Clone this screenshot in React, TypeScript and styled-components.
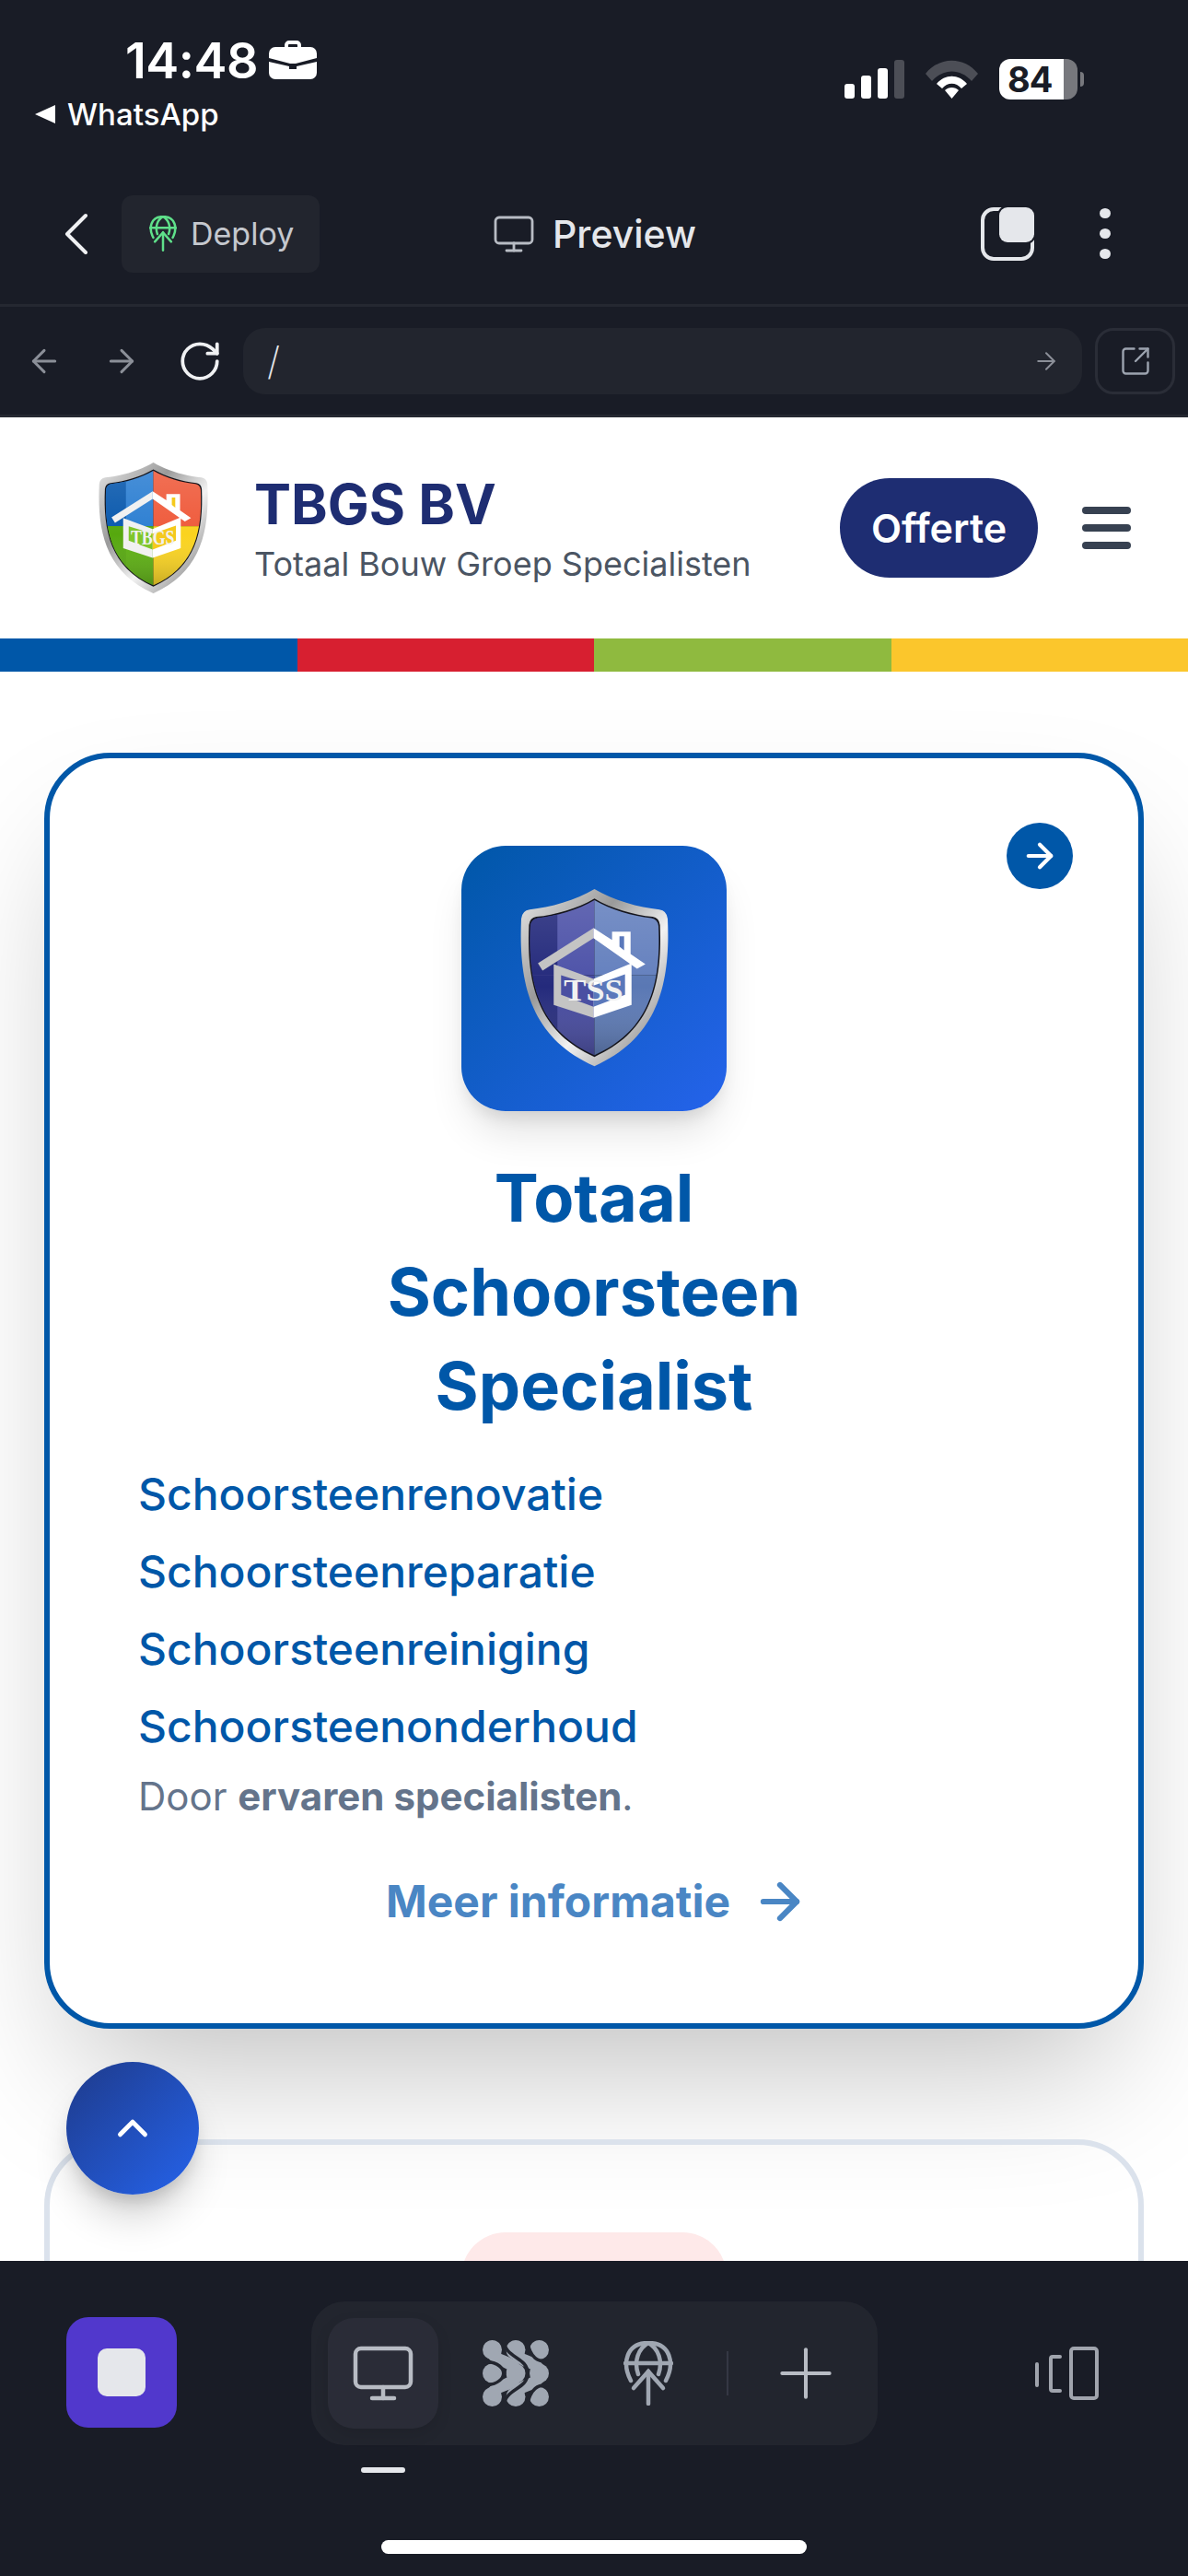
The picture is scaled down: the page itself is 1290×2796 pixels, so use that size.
import React from "react";
import styled, { createGlobalStyle } from "styled-components";
import {
  ArrowLeft,
  ArrowRight,
  ChevronLeft,
  ChevronUp,
  Monitor,
  Plus,
  RotateCw,
  SquareArrowOutUpRight,
} from "lucide-react";

const GlobalStyle = createGlobalStyle`
  html, body {
    margin: 0;
    padding: 0;
    background: #191c26;
  }
  * {
    box-sizing: border-box;
  }
  body {
    font-family: Inter, "Liberation Sans", sans-serif;
  }
`;

const Phone = styled.div`
  width: 1290px;
  height: 2796px;
  display: flex;
  flex-direction: column;
  overflow: hidden;
  background: #191c26;
`;

/* status bar */
const StatusBar = styled.div`
  height: 190px;
  flex: none;
  display: flex;
  justify-content: space-between;
  padding: 35px 120px 0 38px;
`;
const StatusLeft = styled.div`
  display: flex;
  flex-direction: column;
`;
const TimeRow = styled.div`
  display: flex;
  align-items: center;
  gap: 12px;
  padding-left: 98px;
  height: 60px;
  color: #fff;
  font-size: 54px;
  font-weight: 600;
  letter-spacing: -0.5px;
`;
const BackApp = styled.div`
  display: flex;
  align-items: center;
  gap: 13px;
  margin-top: 8px;
  color: #fff;
  font-size: 33px;
  font-weight: 500;
  line-height: 42px;
`;
const BackTriangle = styled.span`
  width: 0;
  height: 0;
  border-top: 10px solid transparent;
  border-bottom: 10px solid transparent;
  border-right: 22px solid #fff;
`;
const StatusRight = styled.div`
  display: flex;
  align-items: center;
  gap: 23px;
  height: 44px;
  margin-top: 29px;
`;
const Battery = styled.div`
  position: relative;
  width: 85px;
  height: 44px;
  border-radius: 12px;
  background: linear-gradient(90deg, #fff 82%, #77787d 82%);
  color: #191c26;
  font-size: 38px;
  font-weight: 700;
  line-height: 45px;
  padding-left: 9px;
  letter-spacing: -1px;
  &::after {
    content: "";
    position: absolute;
    right: -7px;
    top: 14px;
    width: 4px;
    height: 16px;
    border-radius: 0 4px 4px 0;
    background: #77787d;
  }
`;

/* top toolbar */
const NavBar = styled.div`
  height: 143px;
  flex: none;
  display: flex;
  align-items: center;
  padding: 0 84px 13px 60px;
  border-bottom: 3px solid #252831;
`;
const BackButton = styled.div`
  width: 72px;
  height: 80px;
  display: flex;
  color: #f0f1f3;
  svg {
    flex: none;
    margin-left: -17px;
  }
`;
const DeployPill = styled.div`
  display: flex;
  align-items: center;
  gap: 15px;
  width: 215px;
  height: 84px;
  padding-left: 30px;
  border-radius: 12px;
  background: #22252e;
  color: #c5c8ce;
  font-size: 34px;
`;
const PreviewTitle = styled.div`
  display: flex;
  align-items: center;
  gap: 18px;
  margin-left: 187px;
  color: #e5e7eb;
  font-size: 41px;
  font-weight: 500;
`;
const NavActions = styled.div`
  margin-left: auto;
  display: flex;
  align-items: center;
  gap: 71px;
`;
const TabsIcon = styled.div`
  position: relative;
  width: 58px;
  height: 58px;
  &::before {
    content: "";
    position: absolute;
    left: 0;
    bottom: 0;
    width: 50px;
    height: 50px;
    border: 4px solid #e5e7eb;
    border-radius: 14px;
  }
  &::after {
    content: "";
    position: absolute;
    right: 0;
    top: 0;
    width: 38px;
    height: 38px;
    border-radius: 9px;
    background: #e5e7eb;
    box-shadow: 0 0 0 2px #191c26;
  }
`;
const Dots = styled.div`
  display: flex;
  flex-direction: column;
  gap: 11px;
  width: 12px;
  span {
    width: 12px;
    height: 11px;
    border-radius: 50%;
    background: #e5e7eb;
  }
`;

/* address row */
const AddressBar = styled.div`
  height: 120px;
  flex: none;
  display: flex;
  align-items: center;
  padding: 0 14px 0 28px;
  border-bottom: 3px solid #252831;
`;
const AddressIcon = styled.div<{ $w: number; $color: string }>`
  width: ${(p) => p.$w}px;
  display: flex;
  color: ${(p) => p.$color};
`;
const UrlField = styled.div`
  flex: 1;
  height: 72px;
  display: flex;
  align-items: center;
  justify-content: space-between;
  padding: 0 24px 0 26px;
  border-radius: 24px;
  background: #22252e;
  color: #e5e7eb;
  font-size: 42px;
  font-weight: 200;
`;
const OpenButton = styled.div`
  width: 87px;
  height: 72px;
  margin-left: 14px;
  display: flex;
  align-items: center;
  justify-content: center;
  border: 3px solid #2a2d37;
  border-radius: 20px;
  color: #9ca3af;
`;

/* previewed website */
const Viewport = styled.div`
  position: relative;
  flex: 1;
  min-height: 0;
  overflow: hidden;
  background: #fff;
`;
const SiteHeader = styled.header`
  height: 240px;
  display: flex;
  align-items: center;
  padding: 0 62px 0 107px;
`;
const Brand = styled.div`
  display: flex;
  flex-direction: column;
  margin: 4px 0 0 50px;
`;
const BrandName = styled.div`
  color: #1e2d72;
  font-size: 60px;
  font-weight: 700;
  line-height: 68px;
`;
const BrandTag = styled.div`
  color: #4b5563;
  font-size: 36px;
  line-height: 50px;
  margin-top: 6px;
`;
const QuoteButton = styled.div`
  margin-left: auto;
  width: 215px;
  height: 108px;
  display: flex;
  align-items: center;
  justify-content: center;
  border-radius: 54px;
  background: #1e2d72;
  color: #fff;
  font-size: 43px;
  font-weight: 600;
`;
const Burger = styled.div`
  margin-left: 48px;
  display: flex;
  flex-direction: column;
  gap: 11px;
  span {
    width: 53px;
    height: 8px;
    border-radius: 4px;
    background: #374151;
  }
`;
const ColorStrip = styled.div`
  display: grid;
  grid-template-columns: repeat(4, 1fr);
  height: 36px;
`;
const StripPart = styled.div<{ $color: string }>`
  background: ${(p) => p.$color};
`;
const Cards = styled.div`
  display: flex;
  flex-direction: column;
  gap: 120px;
  padding: 88px 48px 0;
`;
const Card = styled.div<{ $featured?: boolean }>`
  position: relative;
  display: flex;
  flex-direction: column;
  height: ${(p) => (p.$featured ? "1385px" : "600px")};
  padding: 95px 96px 0;
  border: 6px solid ${(p) => (p.$featured ? "#0057a8" : "#dbe2ec")};
  border-radius: 72px;
  background: ${(p) => (p.$featured ? "#fff" : "transparent")};
  box-shadow: ${(p) =>
    p.$featured ? "0 75px 150px -36px rgba(0, 0, 0, 0.25)" : "none"};
`;
const CornerBadge = styled.div`
  position: absolute;
  top: 70px;
  right: 71px;
  width: 72px;
  height: 72px;
  display: flex;
  align-items: center;
  justify-content: center;
  border-radius: 50%;
  background: #0057a8;
  color: #fff;
`;
const Tile = styled.div<{ $tint: string }>`
  width: 288px;
  height: 288px;
  flex: none;
  align-self: center;
  display: flex;
  align-items: center;
  justify-content: center;
  border-radius: 48px;
  background: ${(p) => p.$tint};
`;
const BlueTile = styled(Tile)`
  box-shadow: 0 30px 45px -9px rgba(0, 0, 0, 0.12),
    0 12px 18px -6px rgba(0, 0, 0, 0.1);
`;
const CardTitle = styled.h2`
  margin: 43px 0 0;
  color: #0057a8;
  font-size: 72px;
  font-weight: 700;
  line-height: 102px;
  text-align: center;
`;
const ServiceList = styled.div`
  margin-top: 25px;
  display: flex;
  flex-direction: column;
`;
const Service = styled.div`
  color: #0057a8;
  font-size: 48px;
  font-weight: 500;
  line-height: 84px;
`;
const Note = styled.p`
  margin: 0;
  color: #64748b;
  font-size: 42px;
  line-height: 68px;
  b {
    font-weight: 700;
  }
`;
const MoreLink = styled.div`
  margin-top: 46px;
  padding-left: 7px;
  display: flex;
  align-items: center;
  justify-content: center;
  gap: 23px;
  color: #4a86c4;
  font-size: 48px;
  font-weight: 700;
  line-height: 68px;
`;
const ScrollTop = styled.div`
  position: absolute;
  left: 72px;
  bottom: 72px;
  width: 144px;
  height: 144px;
  display: flex;
  align-items: center;
  justify-content: center;
  border-radius: 50%;
  background: linear-gradient(135deg, #1e3a8a, #2563eb);
  box-shadow: 0 30px 45px -9px rgba(0, 0, 0, 0.2),
    0 12px 18px -6px rgba(0, 0, 0, 0.15);
  color: #fff;
`;

/* bottom dock */
const BottomBar = styled.div`
  position: relative;
  height: 342px;
  flex: none;
  display: flex;
  align-items: flex-start;
  padding: 44px 0 0 72px;
`;
const StopButton = styled.div`
  width: 120px;
  height: 120px;
  margin-top: 17px;
  display: flex;
  align-items: center;
  justify-content: center;
  border-radius: 24px;
  background: #5138cc;
  &::before {
    content: "";
    width: 52px;
    height: 52px;
    border-radius: 10px;
    background: #e5e7eb;
  }
`;
const Dock = styled.div`
  width: 615px;
  height: 156px;
  margin-left: 146px;
  display: flex;
  align-items: center;
  padding-left: 18px;
  border-radius: 36px;
  background: #22252e;
`;
const DockItem = styled.div<{ $active?: boolean; $w: number }>`
  width: ${(p) => p.$w}px;
  height: 120px;
  flex: none;
  display: flex;
  align-items: center;
  justify-content: center;
  border-radius: 28px;
  color: ${(p) => (p.$active ? "#b8bcc4" : "#a0a7b2")};
  background: ${(p) => (p.$active ? "#2a2c37" : "transparent")};
  box-shadow: ${(p) => (p.$active ? "0 6px 16px rgba(0, 0, 0, 0.1)" : "none")};
`;
const DockDivider = styled.div`
  width: 2px;
  height: 48px;
  flex: none;
  margin-left: 25px;
  background: #353844;
`;
const DeviceButton = styled.div`
  margin-left: 170px;
  margin-top: 49px;
  display: flex;
`;
const ActiveTick = styled.div`
  position: absolute;
  left: 392px;
  top: 224px;
  width: 48px;
  height: 6px;
  border-radius: 3px;
  background: #e5e7eb;
`;
const HomeBar = styled.div`
  position: absolute;
  left: 414px;
  top: 303px;
  width: 462px;
  height: 15px;
  border-radius: 8px;
  background: #fff;
`;

const SHIELD =
  "M80 0C100 12 128 20 150 22Q158 23 159 32C162 100 150 160 80 191C10 160 -2 100 1 32Q2 23 10 22C32 20 60 12 80 0Z";

type ShieldProps = {
  id: string;
  size: number;
  label: string;
  labelSize: number;
  colors: {
    tl: string;
    tlDark: string;
    tr: string;
    bl: string;
    blDark: string;
    br: string;
  };
  windowLeft: string;
  windowRight: string;
  frameLeft: string;
};

const ShieldLogo = ({
  id,
  size,
  label,
  labelSize,
  colors,
  windowLeft,
  windowRight,
  frameLeft,
}: ShieldProps) => (
  <svg
    width={size}
    height={(size * 192) / 160}
    viewBox="0 0 160 192"
    style={{ flex: "none" }}
  >
    <defs>
      <linearGradient id={`${id}-rim`} x1="0" y1="0" x2="1" y2="1">
        <stop offset="0" stopColor="#e8e8e8" />
        <stop offset="0.35" stopColor="#9a9a9a" />
        <stop offset="0.6" stopColor="#f2f2f2" />
        <stop offset="1" stopColor="#6f6f6f" />
      </linearGradient>
      <linearGradient id={`${id}-gloss`} x1="0" y1="0" x2="0" y2="1">
        <stop offset="0" stopColor="#fff" stopOpacity="0.14" />
        <stop offset="0.55" stopColor="#fff" stopOpacity="0" />
        <stop offset="1" stopColor="#000" stopOpacity="0.28" />
      </linearGradient>
      <clipPath id={`${id}-face`}>
        <path d={SHIELD} transform="translate(80 96) scale(.875) translate(-80 -96)" />
      </clipPath>
    </defs>
    <path d={SHIELD} fill={`url(#${id}-rim)`} />
    <path
      d={SHIELD}
      fill="#15151c"
      transform="translate(80 96) scale(.895) translate(-80 -96)"
    />
    <g clipPath={`url(#${id}-face)`}>
      <rect x="0" y="0" width="80" height="93" fill={colors.tl} />
      <rect x="0" y="0" width="40" height="93" fill={colors.tlDark} />
      <rect x="80" y="0" width="80" height="93" fill={colors.tr} />
      <rect x="0" y="93" width="80" height="100" fill={colors.bl} />
      <rect x="0" y="93" width="40" height="100" fill={colors.blDark} />
      <rect x="80" y="93" width="80" height="100" fill={colors.br} />
      <rect x="0" y="0" width="160" height="192" fill={`url(#${id}-gloss)`} />
    </g>
    <polygon points="19,80 79,42 79,53 24,88" fill={frameLeft} />
    <polygon
      points="79,42 99,55 99,46 119,46 119,70 135,81 126,86 79,53"
      fill="#fff"
    />
    <polygon points="107,51 112,51 112,66 107,62" fill={windowRight} />
    <path d="M36 81L79 97V139L36 125Z" fill={frameLeft} />
    <path d="M79 97L120 80V125L79 139Z" fill="#fff" />
    <path d="M44 93L79 104V127L44 114Z" fill={windowLeft} />
    <path d="M113 92L79 104V127L113 114Z" fill={windowRight} />
    <text
      x="79"
      y="120"
      textAnchor="middle"
      fontFamily="'Liberation Serif', serif"
      fontWeight="700"
      fontSize={labelSize}
      fill="#f1f1f1"
      textLength="64"
      lengthAdjust="spacingAndGlyphs"
    >
      {label}
    </text>
  </svg>
);

const Briefcase = () => (
  <svg width="52" height="42" viewBox="0 0 52 42" fill="#fff">
    <path d="M17 8V5a5 5 0 0 1 5-5h8a5 5 0 0 1 5 5v3h-4V5a1 1 0 0 0-1-1h-8a1 1 0 0 0-1 1v3z" />
    <path d="M7 7h38a7 7 0 0 1 7 7v5L29 25h-6L0 19v-5a7 7 0 0 1 7-7z" />
    <path d="M0 23l22 5v3h8v-3l22-5v12a7 7 0 0 1-7 7H7a7 7 0 0 1-7-7z" />
  </svg>
);

const Signal = () => (
  <svg width="65" height="42" viewBox="0 0 65 42">
    <rect x="0" y="26" width="11" height="16" rx="3" fill="#fff" />
    <rect x="18" y="17" width="11" height="25" rx="3" fill="#fff" />
    <rect x="36" y="9" width="11" height="33" rx="3" fill="#fff" />
    <rect x="54" y="0" width="11" height="42" rx="3" fill="#4c4e56" />
  </svg>
);

const Wifi = () => (
  <svg width="57" height="42" viewBox="0 0 57 42">
    <path d="M0 15C15 -4 42 -4 57 15L50 23C38 9 19 9 7 23Z" fill="#4c4e56" />
    <path d="M12 26C21 15 36 15 45 26L39 31C33 24 24 24 18 31Z" fill="#fff" />
    <path d="M21 33C25 29 32 29 36 33L28.500 42Z" fill="#fff" />
  </svg>
);

const DeployGlobe = ({
  size,
  color,
  width,
}: {
  size: number;
  color: string;
  width: number;
}) => (
  <svg
    width={size}
    height={(size * 70) / 54}
    viewBox="0 0 54 70"
    fill="none"
    stroke={color}
    strokeWidth={width}
    strokeLinecap="round"
  >
    <path d="M8 43C-2 24 3 2 27 2C51 2 56 24 46 43" />
    <path d="M16 36C11 22 16 8 27 2C38 8 43 22 38 36" />
    <path d="M2 24H52" />
    <path d="M27 33V68" />
    <path d="M11 51L27 33L43 51" />
  </svg>
);

const NodesIcon = () => (
  <svg width="72" height="72" viewBox="0 0 72 72" fill="#a0a7b2">
    <circle cx="10.500" cy="10.500" r="10.500" />
    <circle cx="36" cy="10.500" r="10.500" />
    <circle cx="61.500" cy="10.500" r="10.500" />
    <circle cx="10.500" cy="36" r="10.500" />
    <circle cx="36" cy="36" r="10.500" />
    <circle cx="61.500" cy="36" r="10.500" />
    <circle cx="10.500" cy="61.500" r="10.500" />
    <circle cx="36" cy="61.500" r="10.500" />
    <circle cx="61.500" cy="61.500" r="10.500" />
    <path
      d="M10.500 10.500C10.500 26 36 20 36 36C36 52 10.500 46 10.500 61.500"
      fill="none"
      stroke="#a0a7b2"
      strokeWidth="13"
    />
    <path
      d="M36 10.500C36 26 61.500 20 61.500 36C61.500 52 36 46 36 61.500"
      fill="none"
      stroke="#a0a7b2"
      strokeWidth="13"
    />
    <g fill="none" stroke="#22252e" strokeWidth="3.500">
      <path d="M23 0C24 20 49 18 49 36C49 54 24 52 23 72" />
      <path d="M0 23C10 23 20 25 24 36C20 47 10 49 0 49" />
      <path d="M72 23C60 24 52 20 48 0" />
      <path d="M72 49C60 48 52 52 48 72" />
    </g>
  </svg>
);

const DeviceIcon = () => (
  <svg
    width="70"
    height="58"
    viewBox="0 0 70 58"
    fill="none"
    stroke="#a0a4ad"
    strokeWidth="4"
    strokeLinecap="round"
    strokeLinejoin="round"
  >
    <rect x="40" y="2" width="28" height="54" rx="3" />
    <path d="M28 11H20a2 2 0 0 0-2 2V46a2 2 0 0 0 2 2h8" />
    <path d="M3 19V42" />
  </svg>
);

const SERVICES = [
  "Schoorsteenrenovatie",
  "Schoorsteenreparatie",
  "Schoorsteenreiniging",
  "Schoorsteenonderhoud",
];

const STRIP = ["#0057a8", "#d71f30", "#8fba3f", "#fbc62c"];

const App = () => (
  <Phone>
    <GlobalStyle />
    <StatusBar>
      <StatusLeft>
        <TimeRow>
          14:48
          <Briefcase />
        </TimeRow>
        <BackApp>
          <BackTriangle />
          WhatsApp
        </BackApp>
      </StatusLeft>
      <StatusRight>
        <Signal />
        <Wifi />
        <Battery>84</Battery>
      </StatusRight>
    </StatusBar>

    <NavBar>
      <BackButton>
        <ChevronLeft size={80} strokeWidth={1.2} />
      </BackButton>
      <DeployPill>
        <DeployGlobe size={30} color="#5fe08a" width={4.5} />
        Deploy
      </DeployPill>
      <PreviewTitle>
        <Monitor size={48} strokeWidth={1.4} color="#b8bcc4" />
        Preview
      </PreviewTitle>
      <NavActions>
        <TabsIcon />
        <Dots>
          <span />
          <span />
          <span />
        </Dots>
      </NavActions>
    </NavBar>

    <AddressBar>
      <AddressIcon $w={84} $color="#8b8f98">
        <ArrowLeft size={40} strokeWidth={1.8} />
      </AddressIcon>
      <AddressIcon $w={80} $color="#8b8f98">
        <ArrowRight size={40} strokeWidth={1.8} />
      </AddressIcon>
      <AddressIcon $w={72} $color="#f0f1f3">
        <RotateCw size={50} strokeWidth={1.8} />
      </AddressIcon>
      <UrlField>
        /
        <ArrowRight size={30} strokeWidth={1.6} color="#8b8f98" />
      </UrlField>
      <OpenButton>
        <SquareArrowOutUpRight size={36} strokeWidth={1.6} />
      </OpenButton>
    </AddressBar>

    <Viewport>
      <SiteHeader>
        <ShieldLogo
          id="tbgs"
          size={119}
          label="TBGS"
          labelSize={30}
          colors={{
            tl: "#2d7fd2",
            tlDark: "#0a59ad",
            tr: "#ef5b3c",
            bl: "#5cb010",
            blDark: "#56a80e",
            br: "#fad31f",
          }}
          windowLeft="#7fc62a"
          windowRight="#f5c91c"
          frameLeft="#f1f1f1"
        />
        <Brand>
          <BrandName>TBGS BV</BrandName>
          <BrandTag>Totaal Bouw Groep Specialisten</BrandTag>
        </Brand>
        <QuoteButton>Offerte</QuoteButton>
        <Burger>
          <span />
          <span />
          <span />
        </Burger>
      </SiteHeader>
      <ColorStrip>
        {STRIP.map((c) => (
          <StripPart key={c} $color={c} />
        ))}
      </ColorStrip>
      <Cards>
        <Card $featured>
          <CornerBadge>
            <ArrowRight size={42} strokeWidth={2.4} />
          </CornerBadge>
          <BlueTile $tint="linear-gradient(135deg, #0057a8, #2563eb)">
            <ShieldLogo
              id="tss"
              size={161}
              label="TSS"
              labelSize={34}
              colors={{
                tl: "#4d52a8",
                tlDark: "#242a7c",
                tr: "#6480be",
                bl: "#44489e",
                blDark: "#242a7c",
                br: "#5a78b4",
              }}
              windowLeft="#4a4fa2"
              windowRight="#5a78bb"
              frameLeft="#c4c4c4"
            />
          </BlueTile>
          <CardTitle>
            Totaal
            <br />
            Schoorsteen
            <br />
            Specialist
          </CardTitle>
          <ServiceList>
            {SERVICES.map((s) => (
              <Service key={s}>{s}</Service>
            ))}
          </ServiceList>
          <Note>
            Door <b>ervaren specialisten</b>.
          </Note>
          <MoreLink>
            Meer informatie
            <ArrowRight size={62} strokeWidth={2.4} />
          </MoreLink>
        </Card>
        <Card>
          <Tile $tint="#fee9e9" />
        </Card>
      </Cards>
      <ScrollTop>
        <ChevronUp size={54} strokeWidth={2.2} />
      </ScrollTop>
    </Viewport>

    <BottomBar>
      <StopButton />
      <Dock>
        <DockItem $active $w={120}>
          <Monitor size={72} strokeWidth={1.5} />
        </DockItem>
        <DockItem $w={168}>
          <NodesIcon />
        </DockItem>
        <DockItem $w={120}>
          <DeployGlobe size={54} color="#a0a7b2" width={4.5} />
        </DockItem>
        <DockDivider />
        <DockItem $w={168}>
          <Plus size={88} strokeWidth={1.1} color="#b8bcc4" />
        </DockItem>
      </Dock>
      <DeviceButton>
        <DeviceIcon />
      </DeviceButton>
      <ActiveTick />
      <HomeBar />
    </BottomBar>
  </Phone>
);

export default App;
